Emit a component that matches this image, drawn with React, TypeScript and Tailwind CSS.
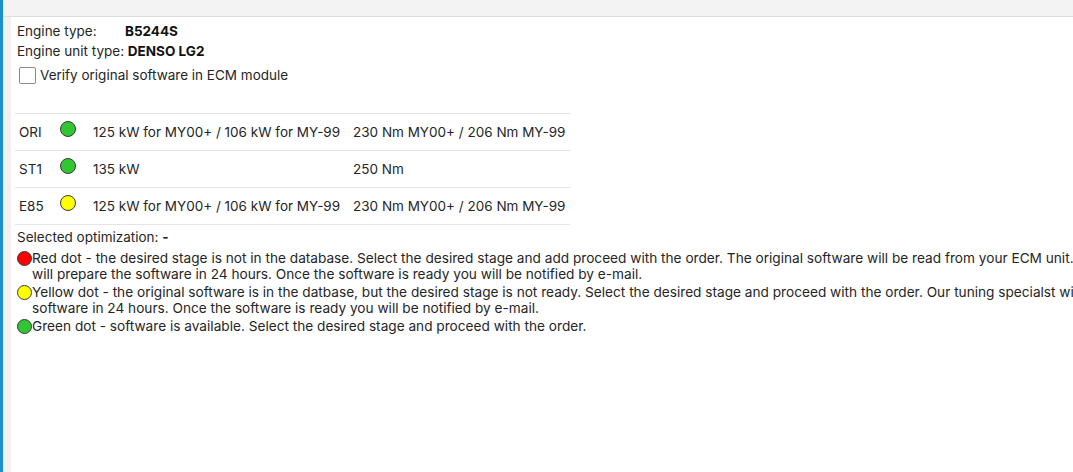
import React from 'react';

type Stage = {
  name: string;
  color: 'green' | 'yellow' | 'red';
  power: string;
  torque: string;
};

const stages: Stage[] = [
  { name: 'ORI', color: 'green', power: '125 kW for MY00+ / 106 kW for MY-99', torque: '230 Nm MY00+ / 206 Nm MY-99' },
  { name: 'ST1', color: 'green', power: '135 kW', torque: '250 Nm' },
  { name: 'E85', color: 'yellow', power: '125 kW for MY00+ / 106 kW for MY-99', torque: '230 Nm MY00+ / 206 Nm MY-99' },
];

const dotClass = {
  green: 'bg-[#33c633]',
  yellow: 'bg-[#ffff00]',
  red: 'bg-[#ff0000]',
};

function Dot({ color, size = 'w-[16px] h-[16px]' }: { color: Stage['color']; size?: string }) {
  return <span className={`inline-block shrink-0 rounded-full border border-[#3a3a3a] ${size} ${dotClass[color]}`} />;
}

const legend: { color: Stage['color']; lines: string[] }[] = [
  {
    color: 'red',
    lines: [
      'Red dot - the desired stage is not in the database. Select the desired stage and add proceed with the order. The original software will be read from your ECM unit. Our tuning specialist',
      'will prepare the software in 24 hours. Once the software is ready you will be notified by e-mail.',
    ],
  },
  {
    color: 'yellow',
    lines: [
      'Yellow dot - the original software is in the datbase, but the desired stage is not ready. Select the desired stage and proceed with the order. Our tuning specialst will prepare the',
      'software in 24 hours. Once the software is ready you will be notified by e-mail.',
    ],
  },
  {
    color: 'green',
    lines: ['Green dot - software is available. Select the desired stage and proceed with the order.'],
  },
];

export default function App() {
  return (
    <div className="w-[1073px] h-[472px] overflow-hidden flex bg-white font-['Inter','Liberation_Sans',sans-serif] text-[13.5px] text-[#262626]">
      <div className="w-[3px] bg-[#1b8fd2] shrink-0" />
      <div className="flex-1 flex flex-col min-w-0">
        <div className="h-[17px] bg-[#f3f3f3] border-b border-[#dedede] shrink-0" />
        <div className="flex flex-1 min-h-0">
          <div className="w-[8px] bg-[#f1f1f1] shrink-0" />
          <div className="flex-1 pl-[4px] pt-[4px] min-w-0">
            <div className="pl-[2px] leading-[20px]">
              <div>
                <span className="inline-block w-[108px]">Engine type:</span>
                <span className="font-bold text-[#111]">B5244S</span>
              </div>
              <div>
                Engine unit type: <span className="font-bold text-[#111]">DENSO LG2</span>
              </div>
              <label className="mt-[3px] flex items-center gap-[4px] h-[22px] pl-[2px]">
                <span className="w-[17px] h-[17px] rounded-[2px] border border-[#8a8a8a] bg-white" />
                <span>Verify original software in ECM module</span>
              </label>
            </div>

            <table className="mt-[27px] w-[555px] table-fixed border-collapse">
              <colgroup>
                <col className="w-[45px]" />
                <col className="w-[33px]" />
                <col className="w-[260px]" />
                <col />
              </colgroup>
              <tbody>
                {stages.map((s) => (
                  <tr key={s.name} className="border-y border-[#e3e3e3] h-[37px]">
                    <td className="pl-[4px]">{s.name}</td>
                    <td>
                      <Dot color={s.color} />
                    </td>
                    <td className="whitespace-nowrap">{s.power}</td>
                    <td className="whitespace-nowrap">{s.torque}</td>
                  </tr>
                ))}
              </tbody>
            </table>

            <div className="mt-[4px] pl-[2px] leading-[17px]">
              Selected optimization: <span className="font-bold">-</span>
            </div>

            <div className="mt-[4px] pl-[2px] leading-[16px] text-[13.65px]">
              {legend.map((l) => (
                <div key={l.color} className="flex items-start mt-[2px]">
                  <Dot color={l.color} size="w-[15px] h-[15px] mt-[1px]" />
                  <div className="whitespace-nowrap">
                    {l.lines.map((t) => (
                      <div key={t}>{t}</div>
                    ))}
                  </div>
                </div>
              ))}
            </div>
          </div>
        </div>
      </div>
    </div>
  );
}
